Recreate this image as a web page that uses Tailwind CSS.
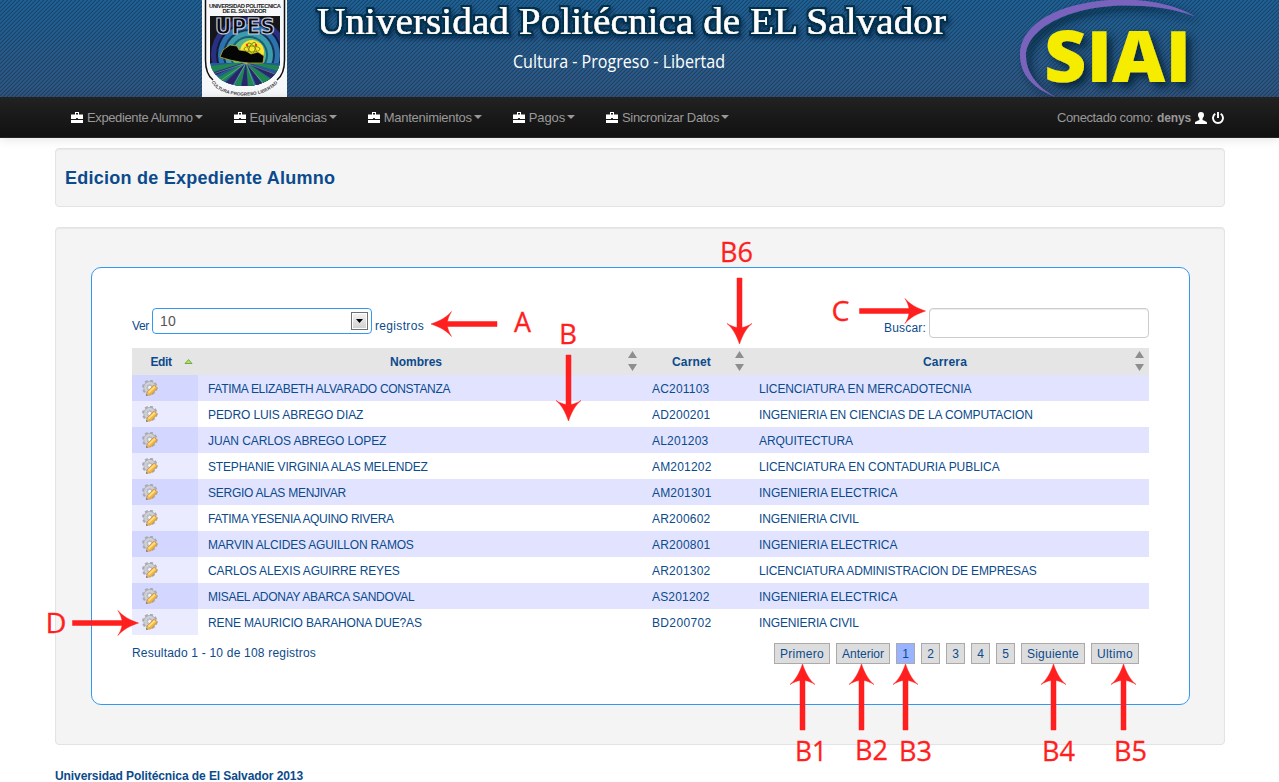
<!DOCTYPE html>
<html lang="es">
<head>
<meta charset="utf-8">
<title>Edicion de Expediente Alumno</title>
<script src="https://cdn.jsdelivr.net/npm/@tailwindcss/browser@4"></script>
</head>
<body class="relative h-[782px] overflow-hidden bg-white font-['Liberation_Sans',Arial,sans-serif] text-[12px] leading-[18px] text-[#0b4a8c]">

<!-- Banner -->
<header class="h-[97px] w-full">
<svg class="block h-[97px] w-[1279px]" viewBox="0 0 1279 97">
  <defs>
    <linearGradient id="sky" x1="0" y1="0" x2="0" y2="1"><stop offset="0" stop-color="#1b6197"/><stop offset="1" stop-color="#305682"/></linearGradient>
    <pattern id="stripe" width="4" height="4" patternUnits="userSpaceOnUse">
      <g shape-rendering="crispEdges" fill="#1b3a55"><path d="M0 3h1v1H0zM1 2h1v1H1zM2 1h1v1H2zM3 0h1v1H3z" opacity=".75"/><path d="M0 2h1v1H0zM1 1h1v1H1zM2 0h1v1H2zM3 3h1v1H3z" opacity=".3"/></g>
    </pattern>
    <filter id="outline" x="-5%" y="-40%" width="110%" height="190%">
      <feMorphology in="SourceAlpha" operator="dilate" radius="2" result="fat"/>
      <feGaussianBlur in="fat" stdDeviation=".6" result="soft"/>
      <feComponentTransfer in="soft" result="edge"><feFuncA type="linear" slope="1.500"/></feComponentTransfer>
      <feFlood flood-color="#06324f"/><feComposite in2="edge" operator="in" result="rim"/>
      <feDropShadow in="rim" dx="2" dy="3" stdDeviation="2" flood-color="#06233a" flood-opacity=".6" result="back"/>
      <feMerge><feMergeNode in="back"/><feMergeNode in="SourceGraphic"/></feMerge>
    </filter>
    <filter id="sh2" x="-10%" y="-30%" width="125%" height="170%"><feDropShadow dx="5" dy="5" stdDeviation="4" flood-color="#061c30" flood-opacity=".85"/></filter>
    <clipPath id="disc"><path d="M210 16H280V63C277 78 263 86 245 86C227 86 213 78 210 63Z"/></clipPath>
    <path id="motto" d="M211.500 82C221 100.500 269 100.500 279.500 80"/>
  </defs>
  <rect width="1279" height="97" fill="url(#sky)"/>
  <rect width="1279" height="97" fill="url(#stripe)"/>

  <!-- University crest -->
  <rect x="202" width="85" height="97" fill="#f7f8fa"/>
  <path d="M205.500 0V60C205.500 71 208 76 213 80M284.500 0V60C284.500 71 282 76 277 80" fill="none" stroke="#111" stroke-width="1.500"/>
  <g font-family="Liberation Sans,Arial,sans-serif" font-weight="700" fill="#222" font-size="5.800">
    <text x="209" y="7.500" textLength="72">UNIVERSIDAD POLITECNICA</text>
    <text x="222.500" y="12.700" textLength="44">DE EL SALVADOR</text>
  </g>
  <g clip-path="url(#disc)">
    <rect x="209" y="16" width="72" height="48" fill="#15151a"/>
    <circle cx="249" cy="55" r="38" fill="#29307f"/><circle cx="249" cy="55" r="33" fill="#101d42"/>
    <circle cx="249" cy="55" r="31" fill="#2d71ad"/><circle cx="249" cy="55" r="26" fill="#143659"/>
    <circle cx="249" cy="55" r="24" fill="#3b9aac"/><circle cx="249" cy="55" r="19" fill="#166077"/>
    <circle cx="249" cy="55" r="17" fill="#59b48b"/><circle cx="252" cy="52" r="12" fill="#ffe52c"/>
    <rect x="209" y="63" width="72" height="30" fill="#245a99"/>
    <g fill="#20884e"><path d="M246 62L209 66V73Z"/><path d="M246 62L210 82L217 88Z"/><path d="M246 62L231 93H239Z"/><path d="M246 62L249 93H257Z"/><path d="M246 62L268 90L277 84Z"/><path d="M246 62L282 72V66Z"/></g>
    <g fill="#292765"><path d="M246 62L209 74V78Z"/><path d="M246 62L219 89L228 93Z"/><path d="M246 62L240 93H248Z"/><path d="M246 62L260 93L267 90Z"/><path d="M246 62L277 82L281 76Z"/></g>
    <g stroke="#b4d6cf" stroke-width=".4"><path d="M246 63L210 75M246 63L213 86M246 63L230 92M246 63L257 92M246 63L269 90M246 63L280 76"/></g>
    <g fill="none" stroke="#6f8c18" stroke-width=".9"><ellipse cx="252" cy="49" rx="8" ry="3"/><ellipse cx="252" cy="49" rx="3" ry="7" transform="rotate(25 252 49)"/><ellipse cx="252" cy="49" rx="3" ry="7" transform="rotate(-35 252 49)"/></g>
    <circle cx="247" cy="45" r="1.200" fill="#e33a20"/><circle cx="256" cy="45" r="1.200" fill="#e33a20"/>
  </g>
  <path d="M220 57L223 50L230 45L237 46L239 50L246 51L251 54L258 52L264 56L263 63L249 63L240 62L230 60Z" fill="#050505" stroke="#d3bd1c" stroke-width=".7"/>
  <text x="215" y="33.500" textLength="60" lengthAdjust="spacingAndGlyphs" font-family="DejaVu Sans,sans-serif" font-weight="700" font-size="21" fill="#08080c" stroke="#c3cadb" stroke-width="1.200">UPES</text>
  <text font-family="Liberation Sans,Arial,sans-serif" font-weight="700" font-size="4.600" fill="#444"><textPath href="#motto" textLength="74">CULTURA PROGRESO LIBERTAD</textPath></text>

  <!-- Institution name -->
  <text x="317" y="33.500" textLength="629" lengthAdjust="spacingAndGlyphs" font-family="Liberation Serif,serif" font-size="37.500" fill="#fff" stroke="#fff" stroke-width=".2" filter="url(#outline)">Universidad Politécnica de EL Salvador</text>
  <text x="513" y="68" textLength="212" lengthAdjust="spacingAndGlyphs" font-family="Open Sans,sans-serif" font-size="17.500" fill="#fff">Cultura - Progreso - Libertad</text>

  <!-- SIAI logo -->
  <g filter="url(#sh2)">
    <path d="M1056 97C1034 89 1020 75 1020 55C1020 21 1066 -.5 1125 -.5C1154 0 1180 7 1195 16.500C1175 8.500 1150 5.500 1125 5.500C1068 6 1026 29 1026 56C1026 73 1038 88 1056 97Z" fill="#7a64bd"/>
    <text x="1044" y="82" textLength="147" lengthAdjust="spacingAndGlyphs" font-family="Open Sans,sans-serif" font-weight="800" font-size="71" fill="#f6ec00">SIAI</text>
  </g>
</svg>
</header>

<!-- Navigation -->
<nav class="relative flex h-[41px] items-center justify-between border-b border-[#252525] bg-linear-to-b from-[#222] to-[#111] pt-px pr-[55px] pl-[71px] text-[13px] text-[#999] shadow-[0_1px_10px_rgba(0,0,0,0.12)]">
  <ul id="menu" class="flex items-center gap-[31px]"></ul>
  <div class="flex items-center">
    <span data-w="96" data-f="13px" class="whitespace-nowrap">Conectado como:</span>
    <b data-w="34" data-f="bold 12px" class="ml-1 text-[12px] whitespace-nowrap">denys</b>
    <svg class="ml-1 h-3 w-3" viewBox="0 0 12 12" fill="#fff"><path d="M6 0C8 0 9 1.200 9 3C9 4.800 8 5.500 7.600 6.500V8C9 9 12 9 12 11V12H0V11C0 9 3 9 4.400 8V6.500C4 5.500 3 4.800 3 3C3 1.200 4 0 6 0Z"/></svg>
    <svg class="ml-[5px] h-3 w-3" viewBox="0 0 12 12" fill="none" stroke="#fff" stroke-width="1.900"><path d="M3.300 1.800A5 5 0 1 0 8.700 1.800M6 0V6"/></svg>
  </div>
</nav>

<main class="ml-[55px] w-[1170px]">
  <section class="mt-[10px] flex h-[59px] items-center rounded-[4px] border border-[#e3e3e3] bg-[#f4f4f4] pl-[9px] shadow-[inset_0_1px_1px_rgba(0,0,0,0.05)]">
    <h1 data-w="271" data-f="bold 18px" class="text-[18px] font-bold whitespace-nowrap">Edicion de Expediente Alumno</h1>
  </section>

  <section class="mt-5 h-[518px] rounded-[4px] border border-[#e3e3e3] bg-[#f4f4f4] px-[35px] pt-[39px] shadow-[inset_0_1px_1px_rgba(0,0,0,0.05)]">
    <div class="h-[438px] w-[1099px] rounded-[10px] border border-[#3399f0] bg-white px-10 pt-10">
      <div class="flex h-10 items-start justify-between">
        <label class="flex items-start">
          <span data-w="17" class="mt-[9px] whitespace-nowrap">Ver</span>
          <span class="ml-[3px] flex h-[26px] w-[220px] items-center justify-between rounded-[4px] border border-[#3399f0] bg-white pr-[3px] pl-[7px] text-[14px] text-[#555]">
            <span data-w="16" data-f="14px">10</span>
            <span class="flex h-[18px] w-[17px] items-center justify-center border border-[#707070] bg-linear-to-b from-[#f4f4f4] to-[#cfcfcf] shadow-[inset_0_0_0_1px_white]"><svg class="h-1 w-[7px]" viewBox="0 0 7 4"><path d="M0 0H7L3.500 4Z"/></svg></span>
          </span>
          <span data-w="49" class="mt-[9px] ml-[3px] whitespace-nowrap">registros</span>
        </label>
        <label class="flex items-start">
          <span data-w="42" class="mt-[11px] whitespace-nowrap">Buscar:</span>
          <input type="text" class="ml-[3px] h-[30px] w-[220px] rounded-[4px] border border-[#ccc] bg-white shadow-[inset_0_1px_1px_rgba(0,0,0,0.075)]">
        </label>
      </div>

      <table class="w-[1017px] table-fixed border-collapse">
        <colgroup><col class="w-[66px]"><col class="w-[444px]"><col class="w-[107px]"><col class="w-[400px]"></colgroup>
        <thead id="head" class="bg-[#e5e5e5]"></thead>
        <tbody id="rows"></tbody>
      </table>

      <div class="mt-2 flex items-start justify-between pr-[10px]">
        <p data-w="184" class="mt-px whitespace-nowrap">Resultado 1 - 10 de 108 registros</p>
        <div id="pages" class="flex gap-[6px]"></div>
      </div>
    </div>
  </section>
</main>
<footer class="mt-[23px] ml-[55px] flex h-[14px] leading-[15px]"><b data-w="248" data-f="bold 12px" class="mt-px whitespace-nowrap">Universidad Politécnica de El Salvador 2013</b></footer>

<!-- Callouts over the screen -->
<svg class="pointer-events-none absolute top-0 left-0 h-[782px] w-[1279px]" viewBox="0 0 1279 782" fill="#ff1f1f" font-family="Open Sans,sans-serif" font-size="28">
  <defs><path id="arrow" d="M0 0C3 9 7 16 12.500 20.500C9 18.500 6 17 2.500 16.500V66H-2.500V16.500C-6 17 -9 18.500 -12.500 20.500C-7 16 -3 9 0 0Z" stroke="#ff1f1f" stroke-width=".5"/></defs>
  <use href="#arrow" transform="translate(802.500 664)"/><use href="#arrow" transform="translate(861.500 664)"/><use href="#arrow" transform="translate(905.500 664)"/><use href="#arrow" transform="translate(1053.500 664)"/><use href="#arrow" transform="translate(1123.500 664)"/>
  <use href="#arrow" transform="translate(739.500 344) rotate(180)"/><use href="#arrow" transform="translate(568.500 421) rotate(180)"/>
  <use href="#arrow" transform="translate(431 324) rotate(-90)"/><use href="#arrow" transform="translate(925.500 311) rotate(90)"/><use href="#arrow" transform="translate(138.500 623) rotate(90)"/>
  <g stroke="#ff1f1f" stroke-width=".3">
    <text x="514" y="332" textLength="17" lengthAdjust="spacingAndGlyphs">A</text>
    <text x="559" y="344" textLength="18" lengthAdjust="spacingAndGlyphs">B</text>
    <text x="720" y="262" textLength="33" lengthAdjust="spacingAndGlyphs">B6</text>
    <text x="831.500" y="321" textLength="18" lengthAdjust="spacingAndGlyphs">C</text>
    <text x="45.500" y="633" textLength="21" lengthAdjust="spacingAndGlyphs">D</text>
    <text x="795" y="761" textLength="32" lengthAdjust="spacingAndGlyphs">B1</text>
    <text x="855" y="760" textLength="33" lengthAdjust="spacingAndGlyphs">B2</text>
    <text x="899" y="761" textLength="33" lengthAdjust="spacingAndGlyphs">B3</text>
    <text x="1042" y="761" textLength="33" lengthAdjust="spacingAndGlyphs">B4</text>
    <text x="1114" y="761" textLength="33" lengthAdjust="spacingAndGlyphs">B5</text>
  </g>
</svg>

<script>
const $ = id => document.getElementById(id);

$('menu').innerHTML = [['Expediente Alumno',106.3],['Equivalencias',77.2],['Mantenimientos',88],['Pagos',36.2],['Sincronizar Datos',97.2]].map(([t,w]) => `
  <li class="flex shrink-0 items-center">
    <svg class="mr-1 h-[11px] w-3 shrink-0" viewBox="0 0 12 11"><path fill="#fff" d="M4 0H8V2.500H12V7H0V2.500H4ZM5 1V2.500H7V1ZM0 8H12V11H0Z" fill-rule="evenodd"/><path fill="#333" d="M5 6H7V7H5Z"/></svg>
    <span data-w="${w}" data-f="13px" class="whitespace-nowrap">${t}</span>
    <svg class="mb-px ml-[2px] h-1 w-2 shrink-0" viewBox="0 0 8 4"><path fill="#999" d="M0 0H8L4 4Z"/></svg>
  </li>`).join('');

const both = `<svg class="absolute top-[3px] right-[5px] h-5 w-[9px]" viewBox="0 0 9 20"><path fill="#8e8e8e" d="M4.500 0L9 7H0ZM0 13H9L4.500 20Z"/></svg>`;
const asc = `<svg class="absolute top-[11px] right-[5px] h-[5px] w-[9px]" viewBox="0 0 9 5"><path fill="#b0e070" stroke="#5ba01c" stroke-width=".8" d="M4.500 .6L8 4.500H1Z"/></svg>`;
$('head').innerHTML = '<tr class="h-[27px]">' + [['Edit',21],['Nombres',52],['Carnet',39],['Carrera',44]].map(([t,w],i) =>
  `<th class="relative p-0 pr-2 text-center font-bold"><span data-w="${w}" data-f="bold 12px" class="whitespace-nowrap">${t}</span>${i ? both : asc}</th>`).join('') + '</tr>';

const gear = `<svg class="h-4 w-4" viewBox="0 0 16 16">
  <circle cx="7.800" cy="7.500" r="6.600" fill="none" stroke="#a9abb1" stroke-width="2.400" stroke-dasharray="3 2.180"/>
  <circle cx="7.800" cy="7.500" r="4.500" fill="none" stroke="#a9abb1" stroke-width="3.800"/>
  <circle cx="7.800" cy="7.500" r="4.400" fill="none" stroke="#cfd0d5" stroke-width="2.600"/>
  <circle cx="7.800" cy="7.500" r="2.200" fill="#f1f2fa" stroke="#a0a2a8" stroke-width=".7"/>
  <path d="M4.500 15.300L5.300 11.600L11.800 5.200L15.500 7.800L9 14.800Z" fill="#f7b53a" stroke="#c48c36" stroke-width=".7"/>
  <path d="M6.500 12.700L13 6.700" stroke="#ffe08a" stroke-width="1.700"/>
  <path d="M4.500 15.300L5.200 12.500L7.600 14.800Z" fill="#d9b98a"/><path d="M4.200 15.600L4.600 14.200L5.900 15.200Z" fill="#3a2a20"/>
</svg>`;
const data = [
 ['FATIMA ELIZABETH ALVARADO CONSTANZA',243.5,'AC201103',57.5,'LICENCIATURA EN MERCADOTECNIA',213],
 ['PEDRO LUIS ABREGO DIAZ',156,'AD200201',58.5,'INGENIERIA EN CIENCIAS DE LA COMPUTACION',275],
 ['JUAN CARLOS ABREGO LOPEZ',179,'AL201203',56.5,'ARQUITECTURA',94],
 ['STEPHANIE VIRGINIA ALAS MELENDEZ',221,'AM201202',59.5,'LICENCIATURA EN CONTADURIA PUBLICA',242],
 ['SERGIO ALAS MENJIVAR',138.5,'AM201301',59.5,'INGENIERIA ELECTRICA',139],
 ['FATIMA YESENIA AQUINO RIVERA',188,'AR200602',58.5,'INGENIERIA CIVIL',100.5],
 ['MARVIN ALCIDES AGUILLON RAMOS',207,'AR200801',58.5,'INGENIERIA ELECTRICA',139],
 ['CARLOS ALEXIS AGUIRRE REYES',193,'AR201302',58.5,'LICENCIATURA ADMINISTRACION DE EMPRESAS',279],
 ['MISAEL ADONAY ABARCA SANDOVAL',209,'AS201202',57.5,'INGENIERIA ELECTRICA',139],
 ['RENE MAURICIO BARAHONA DUE?AS',214.5,'BD200702',59.5,'INGENIERIA CIVIL',100.5]];
$('rows').innerHTML = data.map(([n,nw,c,cw,k,kw]) => `
  <tr class="h-[26px] odd:bg-[#e2e4ff]">
    <td class="bg-[#eaebff] p-0 pl-[10px] [tr:nth-child(odd)>&]:bg-[#d3d6ff]">${gear}</td>
    <td class="p-0 pt-px pl-[10px]"><span data-w="${nw}" class="whitespace-nowrap">${n}</span></td>
    <td class="p-0 pt-px pl-[10px]"><span data-w="${cw}" class="whitespace-nowrap">${c}</span></td>
    <td class="p-0 pt-px pl-[10px]"><span data-w="${kw}" class="whitespace-nowrap">${k}</span></td>
  </tr>`).join('');

$('pages').innerHTML = [['Primero',44],['Anterior',42],['1',7],['2',7],['3',7],['4',7],['5',7],['Siguiente',52],['Ultimo',36]].map(([t,w]) =>
  `<a class="${t === '1' ? 'bg-[#99b3ff]' : 'bg-[#ddd]'} flex h-[21px] min-w-[19px] items-center justify-center border border-[#aaa] px-[5px]"><span data-w="${w}" class="whitespace-nowrap">${t}</span></a>`).join('');

/* Spread each label over its intended width */
const pen = document.createElement('canvas').getContext('2d');
document.querySelectorAll('[data-w]').forEach(el => {
  pen.font = (el.dataset.f || '12px') + ' "Liberation Sans", Arial, sans-serif';
  const t = el.textContent;
  if (t.length > 1) el.style.letterSpacing = ((el.dataset.w - pen.measureText(t).width) / t.length) + 'px';
});
</script>
</body>
</html>
